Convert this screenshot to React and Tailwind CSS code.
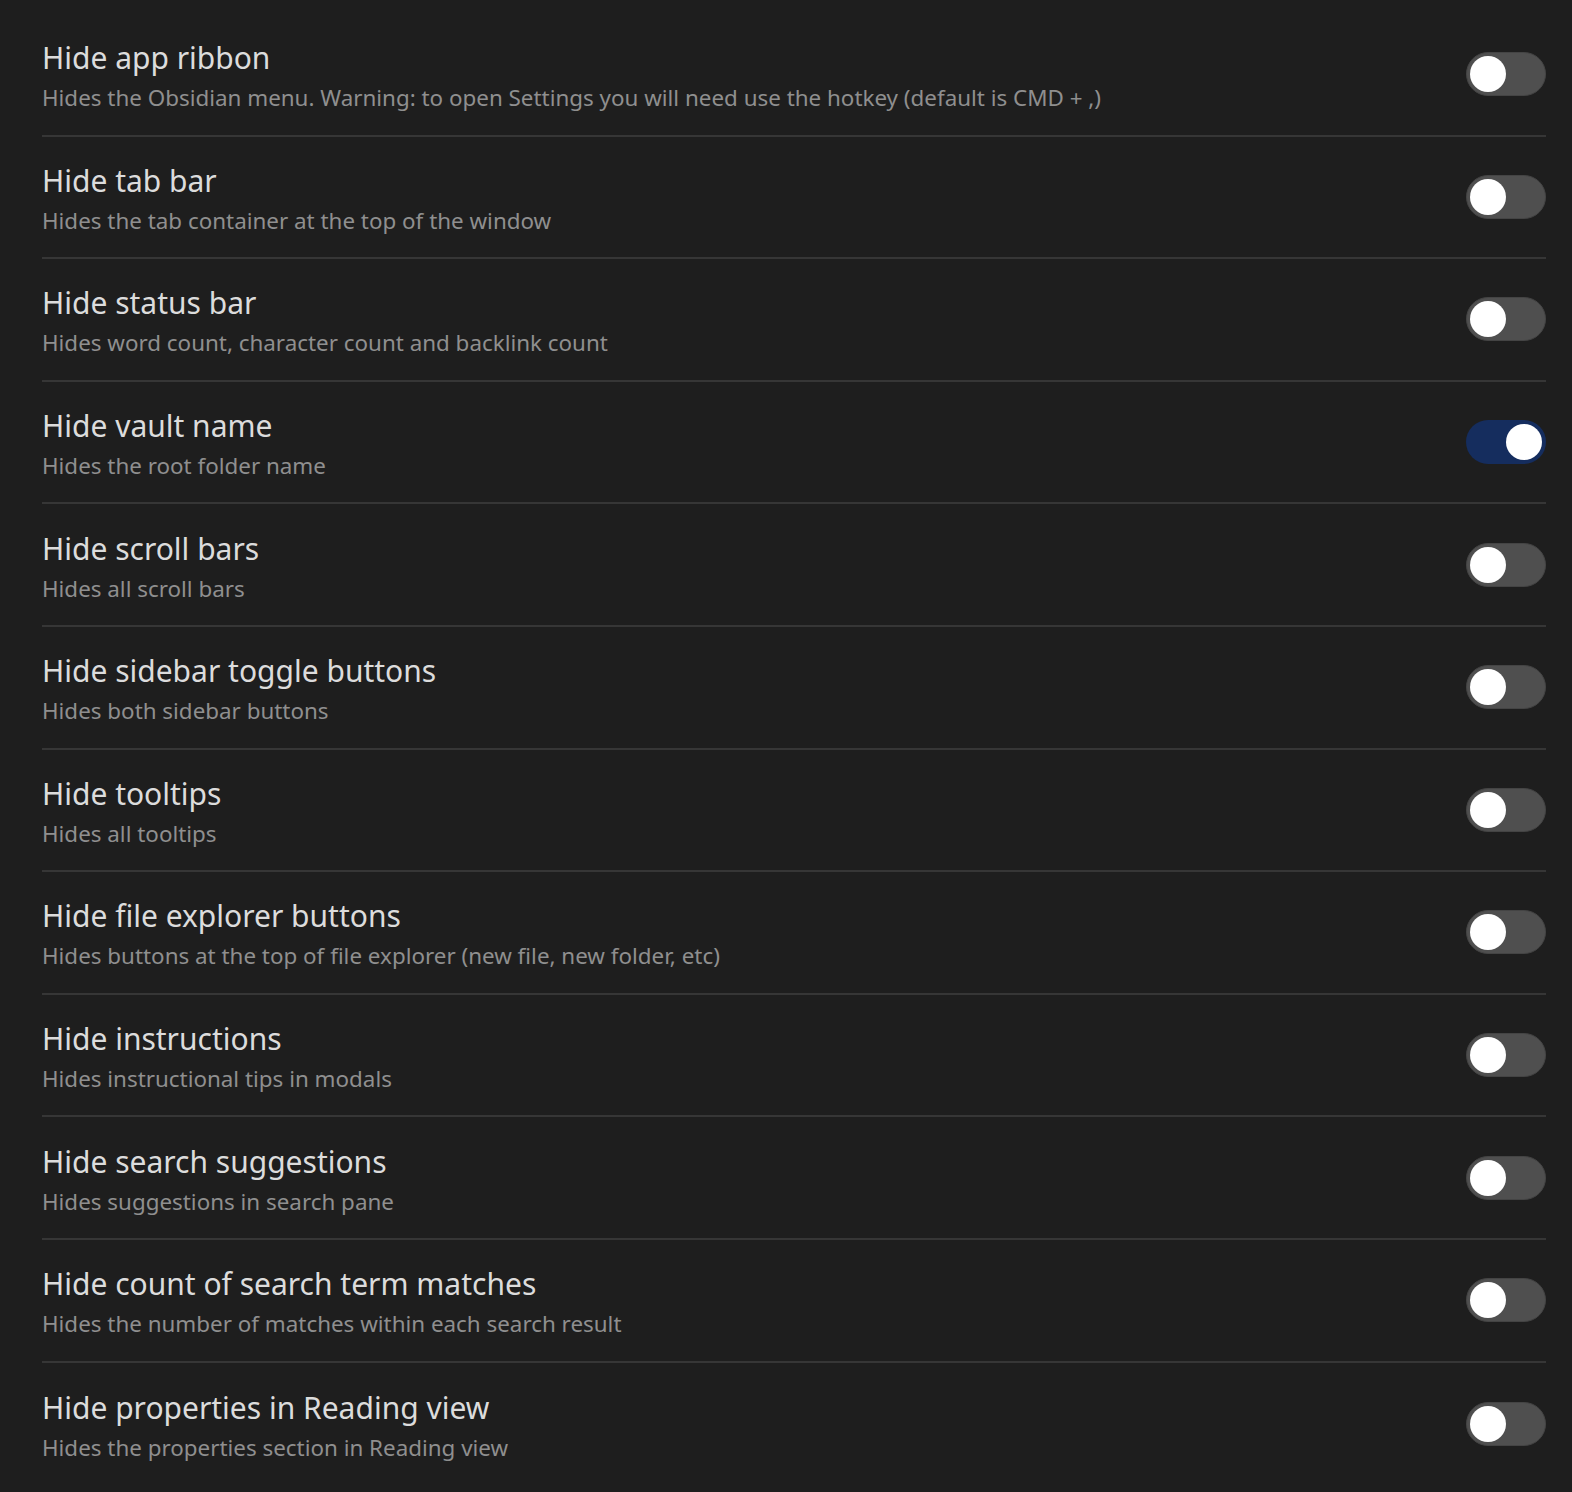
import { useState } from "react";

const settings = [
  { title: "Hide app ribbon", desc: "Hides the Obsidian menu. Warning: to open Settings you will need use the hotkey (default is CMD + ,)", on: false },
  { title: "Hide tab bar", desc: "Hides the tab container at the top of the window", on: false },
  { title: "Hide status bar", desc: "Hides word count, character count and backlink count", on: false },
  { title: "Hide vault name", desc: "Hides the root folder name", on: true },
  { title: "Hide scroll bars", desc: "Hides all scroll bars", on: false },
  { title: "Hide sidebar toggle buttons", desc: "Hides both sidebar buttons", on: false },
  { title: "Hide tooltips", desc: "Hides all tooltips", on: false },
  { title: "Hide file explorer buttons", desc: "Hides buttons at the top of file explorer (new file, new folder, etc)", on: false },
  { title: "Hide instructions", desc: "Hides instructional tips in modals", on: false },
  { title: "Hide search suggestions", desc: "Hides suggestions in search pane", on: false },
  { title: "Hide count of search term matches", desc: "Hides the number of matches within each search result", on: false },
  { title: "Hide properties in Reading view", desc: "Hides the properties section in Reading view", on: false },
];

function Toggle({ on, onClick }) {
  return (
    <button
      onClick={onClick}
      className={
        on
          ? "w-[80px] h-[44px] rounded-full bg-[#152d5e] flex items-center justify-end px-[4px] shrink-0"
          : "w-[80px] h-[44px] rounded-full bg-[#4f4f4f] border border-[#444] flex items-center justify-start px-[3px] shrink-0"
      }
    >
      <span className="w-[36px] h-[36px] rounded-full bg-white block" />
    </button>
  );
}

export default function App() {
  const [items, setItems] = useState(settings);

  const flip = (i) => {
    setItems((prev) => prev.map((s, j) => (j === i ? { ...s, on: !s.on } : s)));
  };

  return (
    <div className="min-h-screen bg-[#1e1e1e] pt-[14px] pl-[42px] pr-[26px]" style={{ fontFamily: '"Noto Sans", sans-serif' }}>
      {items.map((s, i) => (
        <div
          key={s.title}
          className={
            i < items.length - 1
              ? "h-[122.6px] flex items-center justify-between border-b-2 border-[#363636]"
              : "h-[122.6px] flex items-center justify-between"
          }
        >
          <div className="flex flex-col pt-[5px]">
            <div className="text-[30px] leading-[36px] text-[#dcdcdc]">{s.title}</div>
            <div className="text-[22.4px] leading-[30px] text-[#8f8f8f] mt-[7px]">{s.desc}</div>
          </div>
          <Toggle on={s.on} onClick={() => flip(i)} />
        </div>
      ))}
    </div>
  );
}
